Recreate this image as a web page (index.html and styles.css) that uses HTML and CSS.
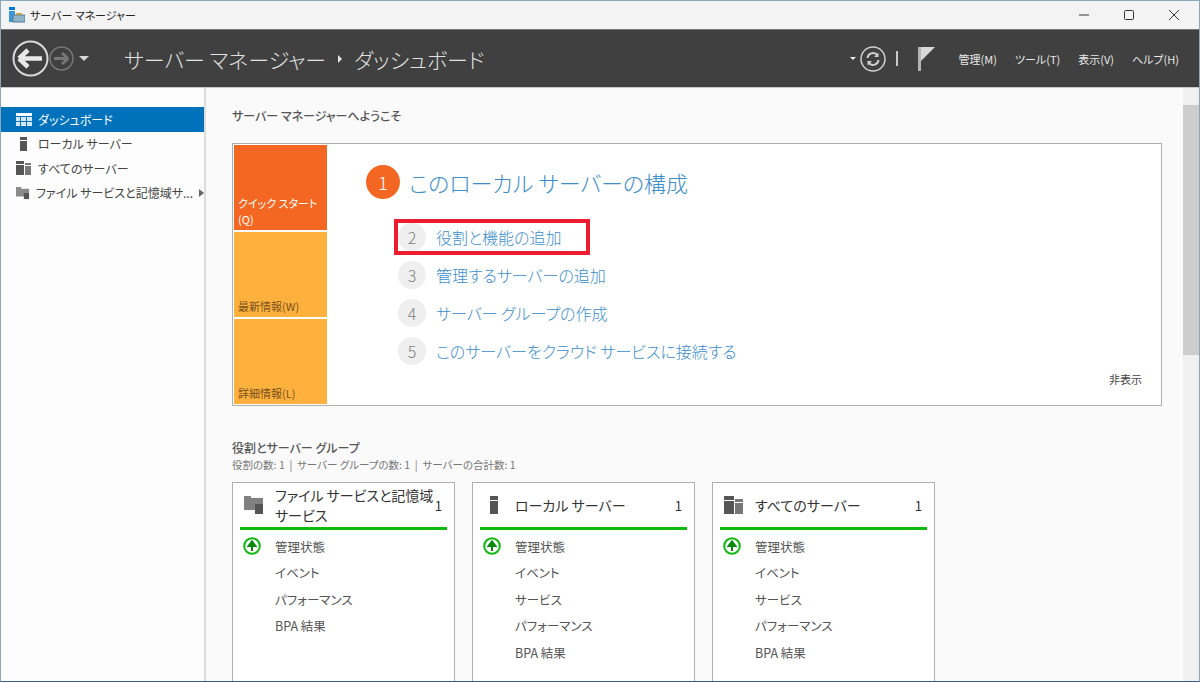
FILE: index.html
```html
<!DOCTYPE html>
<html lang="ja">
<head>
  <meta charset="UTF-8">
  <title>サーバー マネージャー</title>
  <link rel="stylesheet" href="styles.css">
</head>
<body>
  <div id="window">
    <div class="titlebar">
      <svg class="app-icon" width="16" height="16" viewBox="0 0 16 16">
        <rect x="0" y="0" width="6" height="3" fill="#0078d7"/>
        <rect x="0" y="4" width="6" height="11" fill="#3a96dd"/>
        <rect x="4" y="8" width="12" height="7" fill="#8fb4cc" stroke="#5a7a90" stroke-width="1"/>
        <rect x="7" y="6" width="6" height="2" fill="#c9a44a"/>
      </svg>
      <span class="title-text">サーバー マネージャー</span>
      <div class="win-buttons">
        <svg width="12" height="12" viewBox="0 0 12 12"><path d="M1 6H11" stroke="#333" fill="none"/></svg>
        <svg width="12" height="12" viewBox="0 0 12 12"><rect x="1.5" y="1.5" width="9" height="9" rx="1" stroke="#333" fill="none"/></svg>
        <svg width="12" height="12" viewBox="0 0 12 12"><path d="M1 1L11 11M11 1L1 11" stroke="#333" fill="none"/></svg>
      </div>
    </div>

    <div class="toolbar">
      <svg class="nav-back" width="37" height="37" viewBox="0 0 37 37">
        <circle cx="18.5" cy="18.5" r="17" fill="none" stroke="#d8d8d8" stroke-width="2"/>
        <path d="M7 18.5H30M7 18.5L16 10M7 18.5L16 27" fill="none" stroke="#e8e8e8" stroke-width="4.5"/>
      </svg>
      <svg class="nav-forward" width="25" height="25" viewBox="0 0 25 25">
        <circle cx="12.500" cy="12.500" r="11.500" fill="none" stroke="#777" stroke-width="1.500"/>
        <path d="M5 12.500H19M19 12.500L13 7M19 12.500L13 18" fill="none" stroke="#777" stroke-width="3"/>
      </svg>
      <span class="caret"></span>
      <div class="breadcrumb">
        <span>サーバー マネージャー</span>
        <span class="crumb-arrow"></span>
        <span>ダッシュボード</span>
      </div>
      <div class="toolbar-right">
        <span class="caret small"></span>
        <svg class="refresh" width="26" height="26" viewBox="0 0 26 26">
          <circle cx="13" cy="13" r="12" fill="none" stroke="#d0d0d0" stroke-width="1.500"/>
          <path d="M7.500 12a5.500 5.500 0 0 1 9.500-3.200M18.500 14a5.500 5.500 0 0 1-9.500 3.200" fill="none" stroke="#d0d0d0" stroke-width="2"/>
          <path d="M18.500 6.500V11H14zM7.500 19.500V15H12z" fill="#d0d0d0"/>
        </svg>
        <span class="tool-sep"></span>
        <svg class="flag" width="18" height="24" viewBox="0 0 18 24">
          <rect x="0" y="0" width="3" height="24" fill="#b4b4b4"/>
          <path d="M3 0H17L3 14z" fill="#d8d8d8"/>
        </svg>
        <nav class="menu">
          <span>管理(M)</span>
          <span>ツール(T)</span>
          <span>表示(V)</span>
          <span>ヘルプ(H)</span>
        </nav>
      </div>
    </div>

    <div class="content">
      <aside class="sidebar">
        <div class="side-item active">
          <svg width="16" height="13" viewBox="0 0 16 13">
            <rect width="16" height="3" fill="#fff"/>
            <path d="M0 4h4v4H0zM5 4h5v4H5zM11 4h5v4h-5zM0 9h4v4H0zM5 9h5v4H5zM11 9h5v4h-5z" fill="#d5e6f4"/>
          </svg>
          <span>ダッシュボード</span>
        </div>
        <div class="side-item">
          <svg width="16" height="16" viewBox="0 0 16 16">
            <rect x="4" y="1" width="7" height="3" fill="#555"/>
            <rect x="4" y="5" width="7" height="10" fill="#555"/>
          </svg>
          <span>ローカル サーバー</span>
        </div>
        <div class="side-item">
          <svg width="16" height="16" viewBox="0 0 16 16">
            <rect x="0" y="1" width="8" height="3" fill="#555"/>
            <rect x="0" y="5" width="8" height="10" fill="#555"/>
            <rect x="9" y="3" width="6" height="2" fill="#777"/>
            <rect x="9" y="6" width="6" height="9" fill="#777"/>
          </svg>
          <span>すべてのサーバー</span>
        </div>
        <div class="side-item">
          <svg width="16" height="16" viewBox="0 0 16 16">
            <path d="M0 1h6v2h9v9H0z" fill="#8a8a8a"/>
            <rect x="9" y="8" width="6" height="7" fill="#555"/>
          </svg>
          <span class="side-long">ファイル サービスと記憶域サ...</span>
          <span class="side-arrow"></span>
        </div>
      </aside>

      <main class="main">
        <h1 class="welcome">サーバー マネージャーへようこそ</h1>

        <section class="quick">
          <div class="tiles">
            <div class="tile current">クイック スタート(Q)</div>
            <div class="tile">最新情報(W)</div>
            <div class="tile">詳細情報(L)</div>
          </div>
          <div class="steps">
            <div class="step-main">
              <span class="num-big">1</span>
              <span>このローカル サーバーの構成</span>
            </div>
            <div class="step highlighted"><span class="num">2</span><span>役割と機能の追加</span></div>
            <div class="step"><span class="num">3</span><span>管理するサーバーの追加</span></div>
            <div class="step"><span class="num">4</span><span>サーバー グループの作成</span></div>
            <div class="step"><span class="num">5</span><span>このサーバーをクラウド サービスに接続する</span></div>
            <div class="hide-link">非表示</div>
          </div>
        </section>

        <h2 class="group-title">役割とサーバー グループ</h2>
        <p class="group-sub">役割の数: 1 &nbsp;|&nbsp; サーバー グループの数: 1 &nbsp;|&nbsp; サーバーの合計数: 1</p>

        <div class="cards">
          <div class="card">
            <div class="card-head">
              <svg width="20" height="18" viewBox="0 0 20 18">
                <path d="M0 0h7v2h12v12H0z" fill="#808080"/>
                <rect x="11" y="8" width="8" height="10" fill="#555"/>
              </svg>
              <span class="card-title">ファイル サービスと記憶域サービス</span>
              <span class="card-count">1</span>
            </div>
            <div class="card-row status"><svg class="ok" width="18" height="18" viewBox="0 0 18 18"><circle cx="9" cy="9" r="7.800" fill="#fff" stroke="#10b810" stroke-width="2"/><path d="M9 14V8M5.500 9L9 4.500L12.500 9z" stroke="#0a8a0a" stroke-width="2" fill="#0a8a0a"/></svg>管理状態</div>
            <div class="card-row">イベント</div>
            <div class="card-row">パフォーマンス</div>
            <div class="card-row">BPA 結果</div>
          </div>

          <div class="card">
            <div class="card-head">
              <svg width="20" height="18" viewBox="0 0 20 18">
                <rect x="6" y="0" width="8" height="4" fill="#555"/>
                <rect x="6" y="5" width="8" height="13" fill="#555"/>
              </svg>
              <span class="card-title">ローカル サーバー</span>
              <span class="card-count">1</span>
            </div>
            <div class="card-row status"><svg class="ok" width="18" height="18" viewBox="0 0 18 18"><circle cx="9" cy="9" r="7.800" fill="#fff" stroke="#10b810" stroke-width="2"/><path d="M9 14V8M5.500 9L9 4.500L12.500 9z" stroke="#0a8a0a" stroke-width="2" fill="#0a8a0a"/></svg>管理状態</div>
            <div class="card-row">イベント</div>
            <div class="card-row">サービス</div>
            <div class="card-row">パフォーマンス</div>
            <div class="card-row">BPA 結果</div>
          </div>

          <div class="card">
            <div class="card-head">
              <svg width="20" height="18" viewBox="0 0 20 18">
                <rect x="0" y="0" width="10" height="4" fill="#555"/>
                <rect x="0" y="5" width="10" height="13" fill="#555"/>
                <rect x="11" y="3" width="8" height="3" fill="#777"/>
                <rect x="11" y="7" width="8" height="11" fill="#777"/>
              </svg>
              <span class="card-title">すべてのサーバー</span>
              <span class="card-count">1</span>
            </div>
            <div class="card-row status"><svg class="ok" width="18" height="18" viewBox="0 0 18 18"><circle cx="9" cy="9" r="7.800" fill="#fff" stroke="#10b810" stroke-width="2"/><path d="M9 14V8M5.500 9L9 4.500L12.500 9z" stroke="#0a8a0a" stroke-width="2" fill="#0a8a0a"/></svg>管理状態</div>
            <div class="card-row">イベント</div>
            <div class="card-row">サービス</div>
            <div class="card-row">パフォーマンス</div>
            <div class="card-row">BPA 結果</div>
          </div>
        </div>
      </main>

      <div class="scrollbar">
        <span class="scroll-up"></span>
        <div class="scroll-thumb"></div>
      </div>
    </div>
  </div>
</body>
</html>
```

FILE: styles.css
```css
html, body {
  margin: 0;
  height: 100%;
  overflow: hidden;
}

body {
  font-family: "Noto Sans CJK JP", "Noto Sans", sans-serif;
  font-feature-settings: "palt";
  font-size: 12px;
  color: #444;
}

#window {
  display: flex;
  flex-direction: column;
  height: 682px;
  box-sizing: border-box;
  border-top: 1px solid #8aa8bc;
  border-left: 1px solid #8aa8bc;
  border-right: 1px solid #8aa8bc;
  border-bottom: 1px solid #3a5a8a;
  background: #fafafa;
}

/* title bar */
.titlebar {
  display: flex;
  align-items: center;
  height: 28px;
  padding-left: 8px;
  background: #f3f3f3;
  flex-shrink: 0;
}

.app-icon {
  margin-right: 5px;
}

.title-text {
  font-size: 11px;
  color: #222;
}

.win-buttons {
  display: flex;
  gap: 33px;
  margin-left: auto;
  padding-right: 19px;
}

/* dark toolbar */
.toolbar {
  display: flex;
  align-items: center;
  height: 59px;
  padding-left: 11px;
  background: #404040;
  border-top: 1px solid #777;
  border-bottom: 1px solid #c8c8c8;
  flex-shrink: 0;
  box-sizing: border-box;
  color: #e4e4e4;
}

.nav-forward {
  margin-left: 0;
}

.caret {
  width: 0;
  height: 0;
  margin-left: 5px;
  border-left: 5px solid transparent;
  border-right: 5px solid transparent;
  border-top: 5px solid #d8d8d8;
}

.caret.small {
  margin: 0 4px 0 0;
  border-left-width: 3px;
  border-right-width: 3px;
  border-top: 3px solid #eee;
}

.breadcrumb {
  display: flex;
  align-items: center;
  margin-left: 35px;
  font-size: 21px;
  font-weight: 300;
  color: #e0e0e0;
}

.crumb-arrow {
  width: 0;
  height: 0;
  margin: 0 12px;
  border-top: 4px solid transparent;
  border-bottom: 4px solid transparent;
  border-left: 4px solid #e8e8e8;
}

.toolbar-right {
  display: flex;
  align-items: center;
  margin-left: auto;
}

.tool-sep {
  width: 2px;
  height: 15px;
  margin: 0 20px 0 10px;
  background: #c8c8c8;
}

.menu {
  display: flex;
  gap: 18px;
  margin-left: 23px;
  padding-right: 20px;
  font-size: 11px;
  color: #e8e8e8;
}

/* content */
.content {
  display: flex;
  flex: 1;
  min-height: 0;
}

.sidebar {
  width: 204px;
  padding-top: 19px;
  flex-shrink: 0;
  box-sizing: border-box;
  background: #fdfdfd;
  border-right: 2px solid #dcdcdc;
  width: 205px;
}

.side-item {
  display: flex;
  align-items: center;
  height: 24.500px;
  padding-left: 15px;
  font-size: 12px;
  color: #444;
}

.side-item span {
  margin-left: 6px;
  white-space: nowrap;
}

.side-item.active {
  background: #0072bc;
  color: #fff;
}

.side-arrow {
  width: 0;
  height: 0;
  border-top: 4px solid transparent;
  border-bottom: 4px solid transparent;
  border-left: 5px solid #666;
}

.main {
  flex: 1;
  min-width: 0;
  padding: 19px 0 0 26px;
  overflow: hidden;
}

.welcome {
  margin: 0 0 19px;
  font-size: 12px;
  line-height: 17px;
  font-weight: 500;
  color: #555;
}

.quick {
  display: flex;
  width: 930px;
  height: 263px;
  box-sizing: border-box;
  padding: 1px;
  background: #fff;
  border: 1px solid #b0b0b0;
}

.tiles {
  display: flex;
  flex-direction: column;
  gap: 2px;
  width: 93px;
  flex-shrink: 0;
}

.tile {
  display: flex;
  align-items: flex-end;
  flex: 1;
  padding: 0 0 3px 4px;
  font-size: 11px;
  background: #ffb13d;
  color: #7a5220;
}

.tile.current {
  background: #f46722;
  color: #fff;
}

.steps {
  position: relative;
  flex: 1;
  padding: 20px 0 0 39px;
}

.step-main {
  display: flex;
  align-items: center;
  height: 34px;
  margin-bottom: 24px;
  font-size: 22px;
  font-weight: 300;
  color: #3d8ecb;
}

.num-big {
  display: flex;
  align-items: center;
  justify-content: center;
  width: 34px;
  height: 34px;
  margin-right: 9px;
  border-radius: 50%;
  background: #f46722;
  color: #fff;
  font-size: 18px;
}

.step {
  display: flex;
  align-items: center;
  height: 28px;
  margin-bottom: 10px;
  margin-left: 32px;
  font-size: 16px;
  font-weight: 300;
  color: #3d8ecb;
}

.num {
  display: flex;
  align-items: center;
  justify-content: center;
  width: 28px;
  height: 28px;
  margin-right: 10px;
  border-radius: 50%;
  background: #efefef;
  color: #808080;
  font-size: 16px;
}

.step.highlighted {
  outline: 4px solid #ed1c2e;
  outline-offset: 0;
  box-shadow: none;
  width: 188px;
  position: relative;
}

.hide-link {
  position: absolute;
  right: 18px;
  bottom: 17px;
  font-size: 11px;
  color: #444;
}

.group-title {
  margin: 33px 0 0;
  font-size: 12px;
  line-height: 17px;
  font-weight: 500;
  color: #555;
}

.group-sub {
  margin: 1px 0 0;
  font-size: 10.500px;
  line-height: 15px;
  color: #777;
}

/* cards */
.cards {
  display: flex;
  gap: 17px;
  margin-top: 10px;
}

.card {
  width: 223px;
  height: 260px;
  flex-shrink: 0;
  box-sizing: border-box;
  padding: 0 7px;
  background: #fff;
  border: 1px solid #b0b0b0;
}

.card-head {
  display: flex;
  align-items: center;
  height: 44px;
  margin-bottom: 3px;
  padding: 0 5px 0 4px;
  border-bottom: 3px solid #0cbc0c;
}

.card-title {
  flex: 1;
  margin-left: 11px;
  font-size: 14px;
  line-height: 20px;
  color: #333;
}

.card-count {
  font-size: 13px;
  color: #333;
}

.card-row {
  display: flex;
  align-items: center;
  height: 26.500px;
  padding-left: 35px;
  font-size: 12.500px;
  color: #555;
}

.card-row.status {
  padding-left: 3px;
}

.ok {
  margin-right: 14px;
}

/* scrollbar */
.scrollbar {
  width: 16px;
  flex-shrink: 0;
  background: #f0f0f0;
}

.scroll-up {
  display: block;
  height: 17px;
}

.scroll-thumb {
  height: 250px;
  background: #cdcdcd;
}
```
